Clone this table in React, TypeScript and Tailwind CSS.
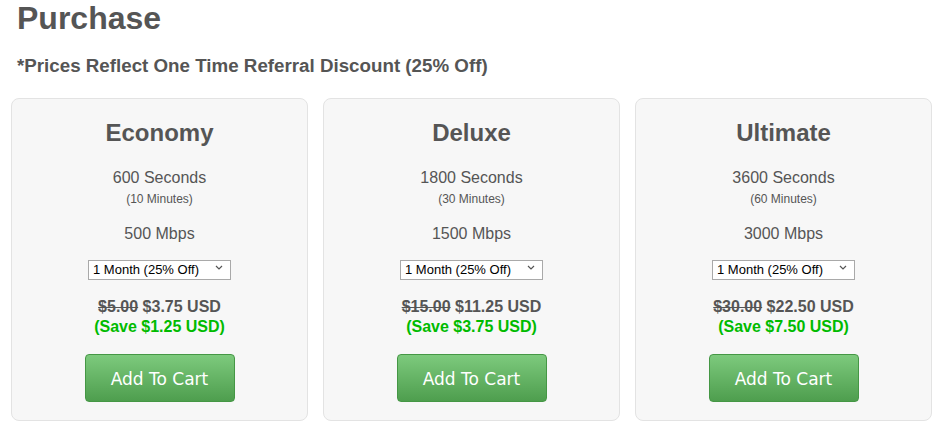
import React from "react";

type Plan = {
  name: string;
  seconds: string;
  minutes: string;
  speed: string;
  old: string;
  price: string;
  save: string;
};

const plans: Plan[] = [
  { name: "Economy", seconds: "600 Seconds", minutes: "(10 Minutes)", speed: "500 Mbps", old: "$5.00", price: "$3.75 USD", save: "(Save $1.25 USD)" },
  { name: "Deluxe", seconds: "1800 Seconds", minutes: "(30 Minutes)", speed: "1500 Mbps", old: "$15.00", price: "$11.25 USD", save: "(Save $3.75 USD)" },
  { name: "Ultimate", seconds: "3600 Seconds", minutes: "(60 Minutes)", speed: "3000 Mbps", old: "$30.00", price: "$22.50 USD", save: "(Save $7.50 USD)" },
];

function Card({ p }: { p: Plan }) {
  return (
    <div className="flex h-[323px] flex-col items-center rounded-[8px] border border-[#e3e3e3] bg-[#f7f7f7] pt-[19px]">
      <h2 className="text-[24px] font-bold leading-[30px] text-[#555]">{p.name}</h2>
      <div className="mt-[20px] text-[16px] leading-[20px] text-[#555]">{p.seconds}</div>
      <div className="mt-[4px] text-[12px] leading-[14px] text-[#555]">{p.minutes}</div>
      <div className="mt-[18px] text-[16px] leading-[20px] text-[#555]">{p.speed}</div>
      <div className="relative mt-[13px] h-[20px] w-[143px]">
        <select className="h-[20px] w-[143px] appearance-none border border-[#a9a9a9] bg-white pl-[4px] text-[13px] leading-[18px] text-black outline-none">
          <option>1 Month (25% Off)</option>
        </select>
        <svg className="pointer-events-none absolute right-[8px] top-[8px]" width="8" height="5" viewBox="0 0 8 5">
          <path d="M1 1 L4 4 L7 1" fill="none" stroke="#555" strokeWidth="1.2" />
        </svg>
      </div>
      <div className="mt-[20px] text-[16px] font-bold leading-[20px] text-[#555]">
        <span className="line-through">{p.old}</span> {p.price}
      </div>
      <div className="text-[16px] font-bold leading-[20px] text-[#00bb00]">{p.save}</div>
      <button className="mt-[17px] h-[48px] w-[150px] rounded-[4px] border border-[#459745] bg-gradient-to-b from-[#7dca7d] to-[#4e9e4e] pt-[4px] font-['DejaVu_Sans',sans-serif] text-[17px] text-white">
        Add To Cart
      </button>
    </div>
  );
}

export default function App() {
  return (
    <div className="min-h-[432px] w-[942px] bg-white pl-[11px] pr-[10px] font-['Liberation_Sans',Arial,sans-serif] text-[#555]">
      <h1 className="pl-[6px] pt-0 text-[32px] font-bold leading-[36px] text-[#555]">Purchase</h1>
      <p className="mt-[19px] pl-[6px] text-[18.75px] font-bold leading-[22px] text-[#555]">
        *Prices Reflect One Time Referral Discount (25% Off)
      </p>
      <div className="mt-[21px] grid grid-cols-3 gap-[15px]">
        {plans.map((p) => (
          <Card key={p.name} p={p} />
        ))}
      </div>
    </div>
  );
}
